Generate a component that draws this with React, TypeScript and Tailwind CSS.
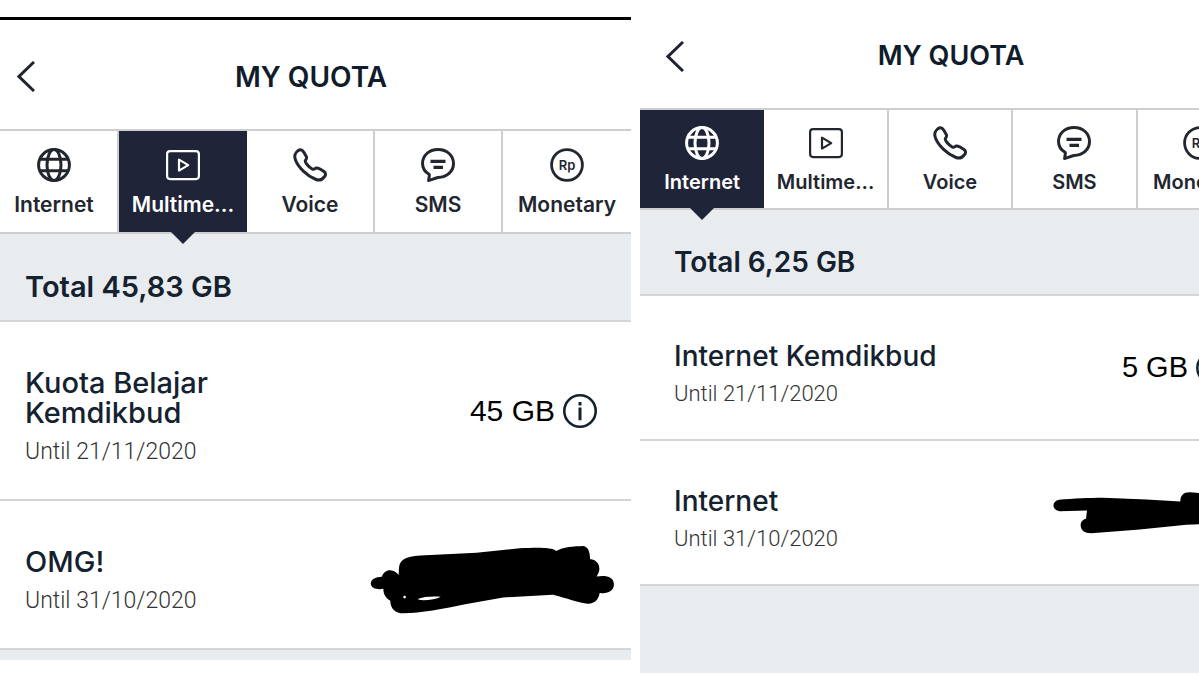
import React from 'react'
import clsx from 'clsx'

interface IIcon {
  className?: string
}

const GlobeIcon = ({ className }: IIcon) => (
  <svg viewBox="0 0 34 34" className={className} fill="none" stroke="currentColor" strokeWidth="3">
    <circle cx="17" cy="17" r="15.4" />
    <ellipse cx="17" cy="17" rx="7" ry="15.4" />
    <path d="M3 11.300h28M3 22.700h28" />
  </svg>
)

const PlayIcon = ({ className }: IIcon) => (
  <svg viewBox="0 0 34 34" className={className} fill="none" stroke="currentColor" strokeWidth="2.200" strokeLinejoin="round">
    <rect x="1.100" y="3.100" width="31.800" height="28" rx="3" />
    <path d="M13 11.600v11l9.200-5.500z" />
  </svg>
)

const PhoneIcon = ({ className }: IIcon) => (
  <svg viewBox="0 0 34 34" className={className} fill="none" stroke="currentColor" strokeWidth="3" strokeLinejoin="round">
    <path d="M1.800 8C2 5.200 4.500 2.500 7 1.800C9 1.400 10 3 11 4.500L13.500 9C14 10.500 13 11.500 12.300 12.500C11.800 14.500 15.500 19 19.500 21.200C21 21.800 22 20.500 23 20C24.500 19.500 26 20.500 27 21L31 23.500C33 25 33 27 31.200 29C29 32 26 32.600 23 31.500C14 28 5 19 2.500 12C2 10.500 1.700 9.500 1.800 8Z" />
  </svg>
)

const MessageIcon = ({ className }: IIcon) => (
  <svg viewBox="0 0 34 34" className={className} fill="none" stroke="currentColor" strokeWidth="3" strokeLinejoin="round">
    <path d="M17 1.500C26 1.500 32.500 7.500 32.500 15.500C32.500 23.500 26 29 17 29.500C14 30 11 32 7.600 32.500C8 30 8.500 28 8.300 26.500C4 24 1.500 20 1.500 15.500C1.500 7.500 8 1.500 17 1.500Z" />
    <path strokeWidth="3.200" d="M9.500 13.300h15M12.500 19.400h9.500" />
  </svg>
)

const RupiahIcon = ({ className }: IIcon) => (
  <svg viewBox="0 0 34 34" className={className}>
    <circle cx="17" cy="17" r="15.400" fill="none" stroke="currentColor" strokeWidth="2.800" />
    <text x="17" y="21.500" textAnchor="middle" fill="currentColor" fontSize="13" fontWeight="600">Rp</text>
  </svg>
)

const InfoIcon = ({ className }: IIcon) => (
  <svg viewBox="0 0 34 34" className={className} fill="none" stroke="currentColor">
    <circle cx="17" cy="17" r="15.700" strokeWidth="2.600" />
    <path strokeWidth="3" d="M17 8v3.400M17 13.500v12.700" />
  </svg>
)

const BackIcon = ({ className }: IIcon) => (
  <svg viewBox="0 0 18 31" className={className} fill="none" stroke="currentColor" strokeWidth="3">
    <path d="M17 1L2 15.500L17 30" />
  </svg>
)

// hand drawn marks that cover an amount
const WideScribble = () => (
  <svg viewBox="150 620 736 208" className="mt-2.5 h-[69px] w-[245px]" aria-hidden="true">
    <path d="M236 690C238 665 255 655 300 652L470 643L600 630C650 628 695 626 710 638C730 626 765 624 790 623C806 624 812 640 812 662C830 664 840 676 840 690C841 700 836 708 832 715C860 710 884 716 884 738C884 760 864 766 841 765C838 785 825 798 805 797C780 795 740 780 700 770L550 778L440 798C370 812 300 826 250 826C225 826 210 812 210 788C196 780 189 768 189 752C170 756 151 750 151 736C152 722 168 717 184 716C190 698 205 692 220 698C228 702 232 706 235 711Z" />
    <path fill="#fff" d="M292 783C310 775 340 774 362 776C348 784 325 787 300 786ZM249 777a4 4 0 1 0 8 0a4 4 0 1 0-8 0" />
  </svg>
)

const LongScribble = () => (
  <svg viewBox="160 488 627 128" className="h-[43px] w-[209px]" aria-hidden="true">
    <path d="M178 514C220 510 270 508 310 508L440 513L542 519C542 500 552 490 572 491L620 496L780 500V580L560 589L420 603L275 614C255 614 243 605 243 590C243 580 250 573 259 571L262 546L180 548C155 545 156 518 178 514Z" />
  </svg>
)

const tabs = [
  { id: 'internet', label: 'Internet', Icon: GlobeIcon },
  { id: 'multimedia', label: 'Multime...', Icon: PlayIcon },
  { id: 'voice', label: 'Voice', Icon: PhoneIcon },
  { id: 'sms', label: 'SMS', Icon: MessageIcon },
  { id: 'monetary', label: 'Monetary', Icon: RupiahIcon },
]

interface IQuota {
  name: string
  until: string
  amount?: string
  cover?: React.ReactNode
}

interface IQuotaScreen {
  initialTab: string
  total: string
  quotas: IQuota[]
  large?: boolean
}

const QuotaScreen = ({ initialTab, total, quotas, large }: IQuotaScreen) => {
  const [active, setActive] = React.useState(initialTab)

  return (
    <>
      <header className={clsx('relative flex items-center justify-center border-b-2 border-[#cdcecf] pt-1', large ? 'h-[111px]' : 'h-[110px]')}>
        <button type="button" aria-label="Back" className="absolute left-[26px] text-[#1f2430]">
          <BackIcon className="h-[31px] w-[18px]" />
        </button>
        <h1 className={clsx('font-semibold text-[#101c2b]', large ? 'text-[28px]' : 'text-[27px]')}>MY QUOTA</h1>
      </header>

      <nav className="grid grid-cols-5 border-b-2 border-[#cdcecf]">
        {tabs.map(({ id, label, Icon }, index) => (
          <button key={id} type="button" aria-pressed={active === id} onClick={() => setActive(id)}
            className={clsx('relative flex flex-col items-center',
              large ? 'gap-[11px] pt-[17px] pb-[15px] text-[21px]' : 'gap-2.5 pt-4 pb-3.5 text-[20px]',
              active === id ? 'bg-[#1f2438] text-white' : 'text-[#22262f]',
              index < tabs.length - 1 && active !== id && 'border-r-2 border-[#cdcecf]')}>
            <Icon className="size-[34px]" />
            <span className="leading-6 font-semibold">{label}</span>
            {active === id && (
              <svg viewBox="0 0 24 12" className="absolute top-full h-3 w-6 text-[#1f2438]" aria-hidden="true">
                <path fill="currentColor" d="M0 0h24L12 12z" />
              </svg>
            )}
          </button>
        ))}
      </nav>

      <div className={clsx('border-b-2 border-[#d3d5d6] bg-[#e9ecef] pl-[34px] leading-9 font-semibold text-[#14212f]',
        large ? 'pt-[35px] pb-[15px] text-[29px]' : 'pt-[34px] pb-3.5 text-[28px]')}>
        Total {total}
      </div>

      <ul>
        {quotas.map((quota) => (
          <li key={quota.name} className="flex items-center justify-between border-b-2 border-[#d3d5d6] pl-[34px]">
            <div className={clsx('max-w-[300px]', large ? 'w-[220px] pt-[46px] pb-[34px]' : 'pt-[45px] pb-8')}>
              <h2 className={clsx('leading-[30px] font-medium text-[#14212f]', large ? 'text-[29px]' : 'text-[28px]')}>{quota.name}</h2>
              <p className={clsx("font-['Roboto',sans-serif] leading-[26px] font-light text-[#333]", large ? 'mt-[11px] text-[23px]' : 'mt-2.5 text-[22px]')}>Until {quota.until}</p>
            </div>
            {quota.amount && (
              <div className={clsx("flex items-center gap-2 font-['Liberation_Sans',sans-serif] text-black", large ? 'pr-[34px] text-[30px]' : 'pr-8 text-[29px]')}>
                {quota.amount}
                <button type="button" aria-label={`Details of ${quota.name}`} className="text-[#14212f]">
                  <InfoIcon className="size-[34px]" />
                </button>
              </div>
            )}
            {quota.cover}
          </li>
        ))}
      </ul>
    </>
  )
}

const App = () => {
  return (
    <main className="grid grid-cols-[631fr_559fr] items-start gap-[9px] bg-white font-['Inter',sans-serif]">
      <section className="overflow-hidden pt-[17px]">
        <div className="h-[3px] bg-black" />
        <div className="-ml-[9px]">
          <QuotaScreen large initialTab="multimedia" total="45,83 GB"
            quotas={[
              { name: 'Kuota Belajar Kemdikbud', until: '21/11/2020', amount: '45 GB' },
              { name: 'OMG!', until: '31/10/2020', cover: <div className="pr-4"><WideScribble /></div> },
            ]} />
        </div>
        <div className="h-2.5 bg-[#e9ecef]" />
      </section>

      <section className="overflow-hidden">
        <div className="min-w-[622px]">
          <QuotaScreen initialTab="internet" total="6,25 GB"
            quotas={[
              { name: 'Internet Kemdikbud', until: '21/11/2020', amount: '5 GB' },
              { name: 'Internet', until: '31/10/2020', cover: <LongScribble /> },
            ]} />
          <div className="h-[87px] bg-[#e9ecef]" />
        </div>
      </section>
    </main>
  )
}

export default App
